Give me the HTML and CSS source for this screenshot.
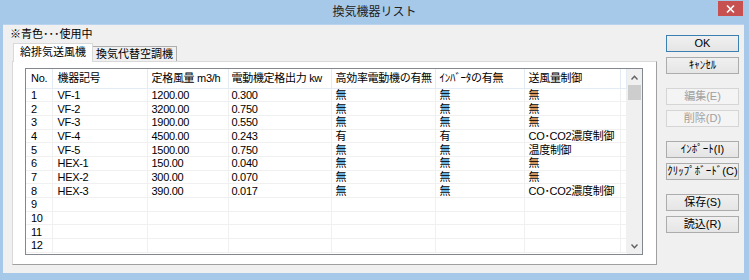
FILE: index.html
```html
<!DOCTYPE html>
<html lang="ja">
<head>
    <meta charset="UTF-8">
    <title>換気機器リスト</title>
    <link rel="stylesheet" href="styles.css">
</head>
<body>
    <div class="window">
        <div class="titlebar">
            <span></span>
            <span class="title">換気機器リスト</span>
            <button class="close" type="button">
                <svg width="9" height="8" viewBox="0 0 9 8"><path d="M1 0.5 L8 7.5 M8 0.5 L1 7.5" stroke="#fff" stroke-width="1.6"/></svg>
            </button>
        </div>
        <div class="client">
            <div class="main">
                <p class="note">※青色･･･使用中</p>
                <div class="tabs">
                    <div class="tab active">給排気送風機</div>
                    <div class="tab">換気代替空調機</div>
                </div>
                <div class="panel">
                    <div class="grid">
                        <table class="list">
                            <colgroup>
                                <col class="c-no">
                                <col class="c-name">
                                <col class="c-air">
                                <col class="c-out">
                                <col class="c-eff">
                                <col class="c-inv">
                                <col class="c-ctl">
                                <col>
                            </colgroup>
                            <thead>
                                <tr>
                                    <th>No.</th>
                                    <th>機器記号</th>
                                    <th>定格風量 m3/h</th>
                                    <th>電動機定格出力 kw</th>
                                    <th>高効率電動機の有無</th>
                                    <th>ｲﾝﾊﾞｰﾀの有無</th>
                                    <th>送風量制御</th>
                                    <th></th>
                                </tr>
                            </thead>
                            <tbody>
                                <tr><td>1</td><td>VF-1</td><td>1200.00</td><td>0.300</td><td>無</td><td>無</td><td>無</td><td></td></tr>
                                <tr><td>2</td><td>VF-2</td><td>3200.00</td><td>0.750</td><td>無</td><td>無</td><td>無</td><td></td></tr>
                                <tr><td>3</td><td>VF-3</td><td>1900.00</td><td>0.550</td><td>無</td><td>無</td><td>無</td><td></td></tr>
                                <tr><td>4</td><td>VF-4</td><td>4500.00</td><td>0.243</td><td>有</td><td>有</td><td>CO･CO2濃度制御</td><td></td></tr>
                                <tr><td>5</td><td>VF-5</td><td>1500.00</td><td>0.750</td><td>無</td><td>無</td><td>温度制御</td><td></td></tr>
                                <tr><td>6</td><td>HEX-1</td><td>150.00</td><td>0.040</td><td>無</td><td>無</td><td>無</td><td></td></tr>
                                <tr><td>7</td><td>HEX-2</td><td>300.00</td><td>0.070</td><td>無</td><td>無</td><td>無</td><td></td></tr>
                                <tr><td>8</td><td>HEX-3</td><td>390.00</td><td>0.017</td><td>無</td><td>無</td><td>CO･CO2濃度制御</td><td></td></tr>
                                <tr><td>9</td><td></td><td></td><td></td><td></td><td></td><td></td><td></td></tr>
                                <tr><td>10</td><td></td><td></td><td></td><td></td><td></td><td></td><td></td></tr>
                                <tr><td>11</td><td></td><td></td><td></td><td></td><td></td><td></td><td></td></tr>
                                <tr><td>12</td><td></td><td></td><td></td><td></td><td></td><td></td><td></td></tr>
                            </tbody>
                        </table>
                        <div class="scrollbar">
                            <svg class="arrow" width="7" height="5" viewBox="0 0 7 5"><path d="M0.5 4.5 L3.5 1.2 L6.5 4.5" fill="none" stroke="#606060" stroke-width="1.4"/></svg>
                            <div class="thumb"></div>
                            <div class="track"></div>
                            <svg class="arrow" width="7" height="5" viewBox="0 0 7 5"><path d="M0.5 0.5 L3.5 3.8 L6.5 0.5" fill="none" stroke="#606060" stroke-width="1.4"/></svg>
                        </div>
                    </div>
                </div>
            </div>
            <div class="buttons">
                <div class="group">
                    <button type="button" class="btn default">OK</button>
                    <button type="button" class="btn">ｷｬﾝｾﾙ</button>
                </div>
                <div class="group">
                    <button type="button" class="btn" disabled>編集(E)</button>
                    <button type="button" class="btn" disabled>削除(D)</button>
                </div>
                <div class="group">
                    <button type="button" class="btn">ｲﾝﾎﾟｰﾄ(I)</button>
                    <button type="button" class="btn">ｸﾘｯﾌﾟﾎﾞｰﾄﾞ(C)</button>
                </div>
                <div class="group">
                    <button type="button" class="btn">保存(S)</button>
                    <button type="button" class="btn">読込(R)</button>
                </div>
            </div>
        </div>
    </div>
</body>
</html>
```

FILE: styles.css
```css
body {
    margin: 0;
    font-family: "Liberation Sans", "Noto Sans CJK JP", sans-serif;
    font-size: 11px;
    color: #000;
}
.window {
    width: 749px;
    height: 280px;
    box-sizing: border-box;
    background-color: #a6c8e9;
    padding: 0 5px 7px 3px;
    display: flex;
    flex-direction: column;
}
.titlebar {
    height: 24px;
    flex: none;
    display: grid;
    grid-template-columns: 1fr auto 1fr;
    align-items: start;
}
.title {
    font-size: 12px;
    line-height: 24px;
    color: #222;
    margin-left: 2px;
}
.close {
    justify-self: end;
    width: 25px;
    height: 15px;
    margin: 1px 1px 0 0;
    padding: 0;
    border: none;
    background-color: #c75050;
    display: flex;
    align-items: center;
    justify-content: center;
}
.client {
    flex: 1;
    background-color: #f0f0f0;
    display: flex;
    border-top: 1px solid #b9d3ee;
}
.main {
    width: 647px;
    padding-left: 7px;
    display: flex;
    flex-direction: column;
}
.note {
    margin: 0;
    height: 17px;
    line-height: 17px;
    padding-top: 1px;
}
.tabs {
    display: flex;
    align-items: flex-end;
    height: 18px;
    margin-left: 3px;
}
.tab {
    height: 14px;
    line-height: 14px;
    padding: 0 3px;
    border: 1px solid #adadad;
    border-bottom: none;
    background-color: #f0f0f0;
    white-space: nowrap;
}
.tab.active {
    height: 18px;
    line-height: 16px;
    padding: 0 6px 0 6px;
    background-color: #fff;
    border-color: #d9d9d9;
    position: relative;
    z-index: 1;
    margin-bottom: -1px;
}
.tab + .tab {
    margin-left: -1px;
}
.panel {
    margin-left: 2px;
    width: 645px;
    height: 204px;
    box-sizing: border-box;
    background-color: #fff;
    border: 1px solid #d9d9d9;
    border-right-color: #a0a0a0;
    border-bottom-color: #a0a0a0;
    padding: 6px 13px 0 12px;
}
.grid {
    display: flex;
    align-items: flex-start;
    width: 618px;
    height: 187px;
    box-sizing: border-box;
    border: 1px solid #828790;
    background-color: #fff;
}
.list {
    flex: 1;
    border-collapse: collapse;
    table-layout: fixed;
    letter-spacing: -0.3px;
}
.c-no { width: 26px; }
.c-name { width: 95px; }
.c-air { width: 81px; }
.c-out { width: 103px; }
.c-eff { width: 104px; }
.c-inv { width: 89px; }
.c-ctl { width: 96px; }
.list thead tr {
    height: 19px;
}
.list tbody tr {
    height: 13.7px;
}
.list th,
.list td {
    padding: 0 0 0 5px;
    line-height: 12px;
    text-align: left;
    font-weight: normal;
    white-space: nowrap;
    overflow: hidden;
}
.list th {
    border-right: 1px solid #e3ebf4;
    border-bottom: 1px solid #e3ebf4;
}
.list td {
    border-right: 1px solid #f0f0f0;
    border-bottom: 1px solid #f0f0f0;
}
.list td:nth-child(n+3),
.list th:nth-child(n+3) {
    padding-left: 4px;
}
.list th:nth-child(4),
.list td:nth-child(4) {
    padding-left: 3px;
}
.scrollbar {
    width: 15px;
    height: 185px;
    flex: none;
    background-color: #f0f0f0;
    display: flex;
    flex-direction: column;
    align-items: center;
}
.arrow {
    margin: 6px 0 5px;
}
.thumb {
    width: 13px;
    height: 15px;
    background-color: #cdcdcd;
}
.track {
    flex: 1;
}
.buttons {
    padding: 10px 0 0 9px;
    display: flex;
    flex-direction: column;
    gap: 14px;
}
.group {
    display: flex;
    flex-direction: column;
    gap: 5px;
}
.btn {
    width: 73px;
    height: 17px;
    padding: 0;
    font-family: "Liberation Sans", "Noto Sans CJK JP", sans-serif;
    font-size: 11px;
    line-height: 15px;
    color: #000;
    border: 1px solid #acacac;
    background: linear-gradient(#f0f0f0, #e5e5e5);
    white-space: nowrap;
}
.btn.default {
    border-color: #3c7fb1;
}
.btn:disabled {
    color: #a0a0a0;
    border-color: #d5d5d5;
    background: #f4f4f4;
}
```
